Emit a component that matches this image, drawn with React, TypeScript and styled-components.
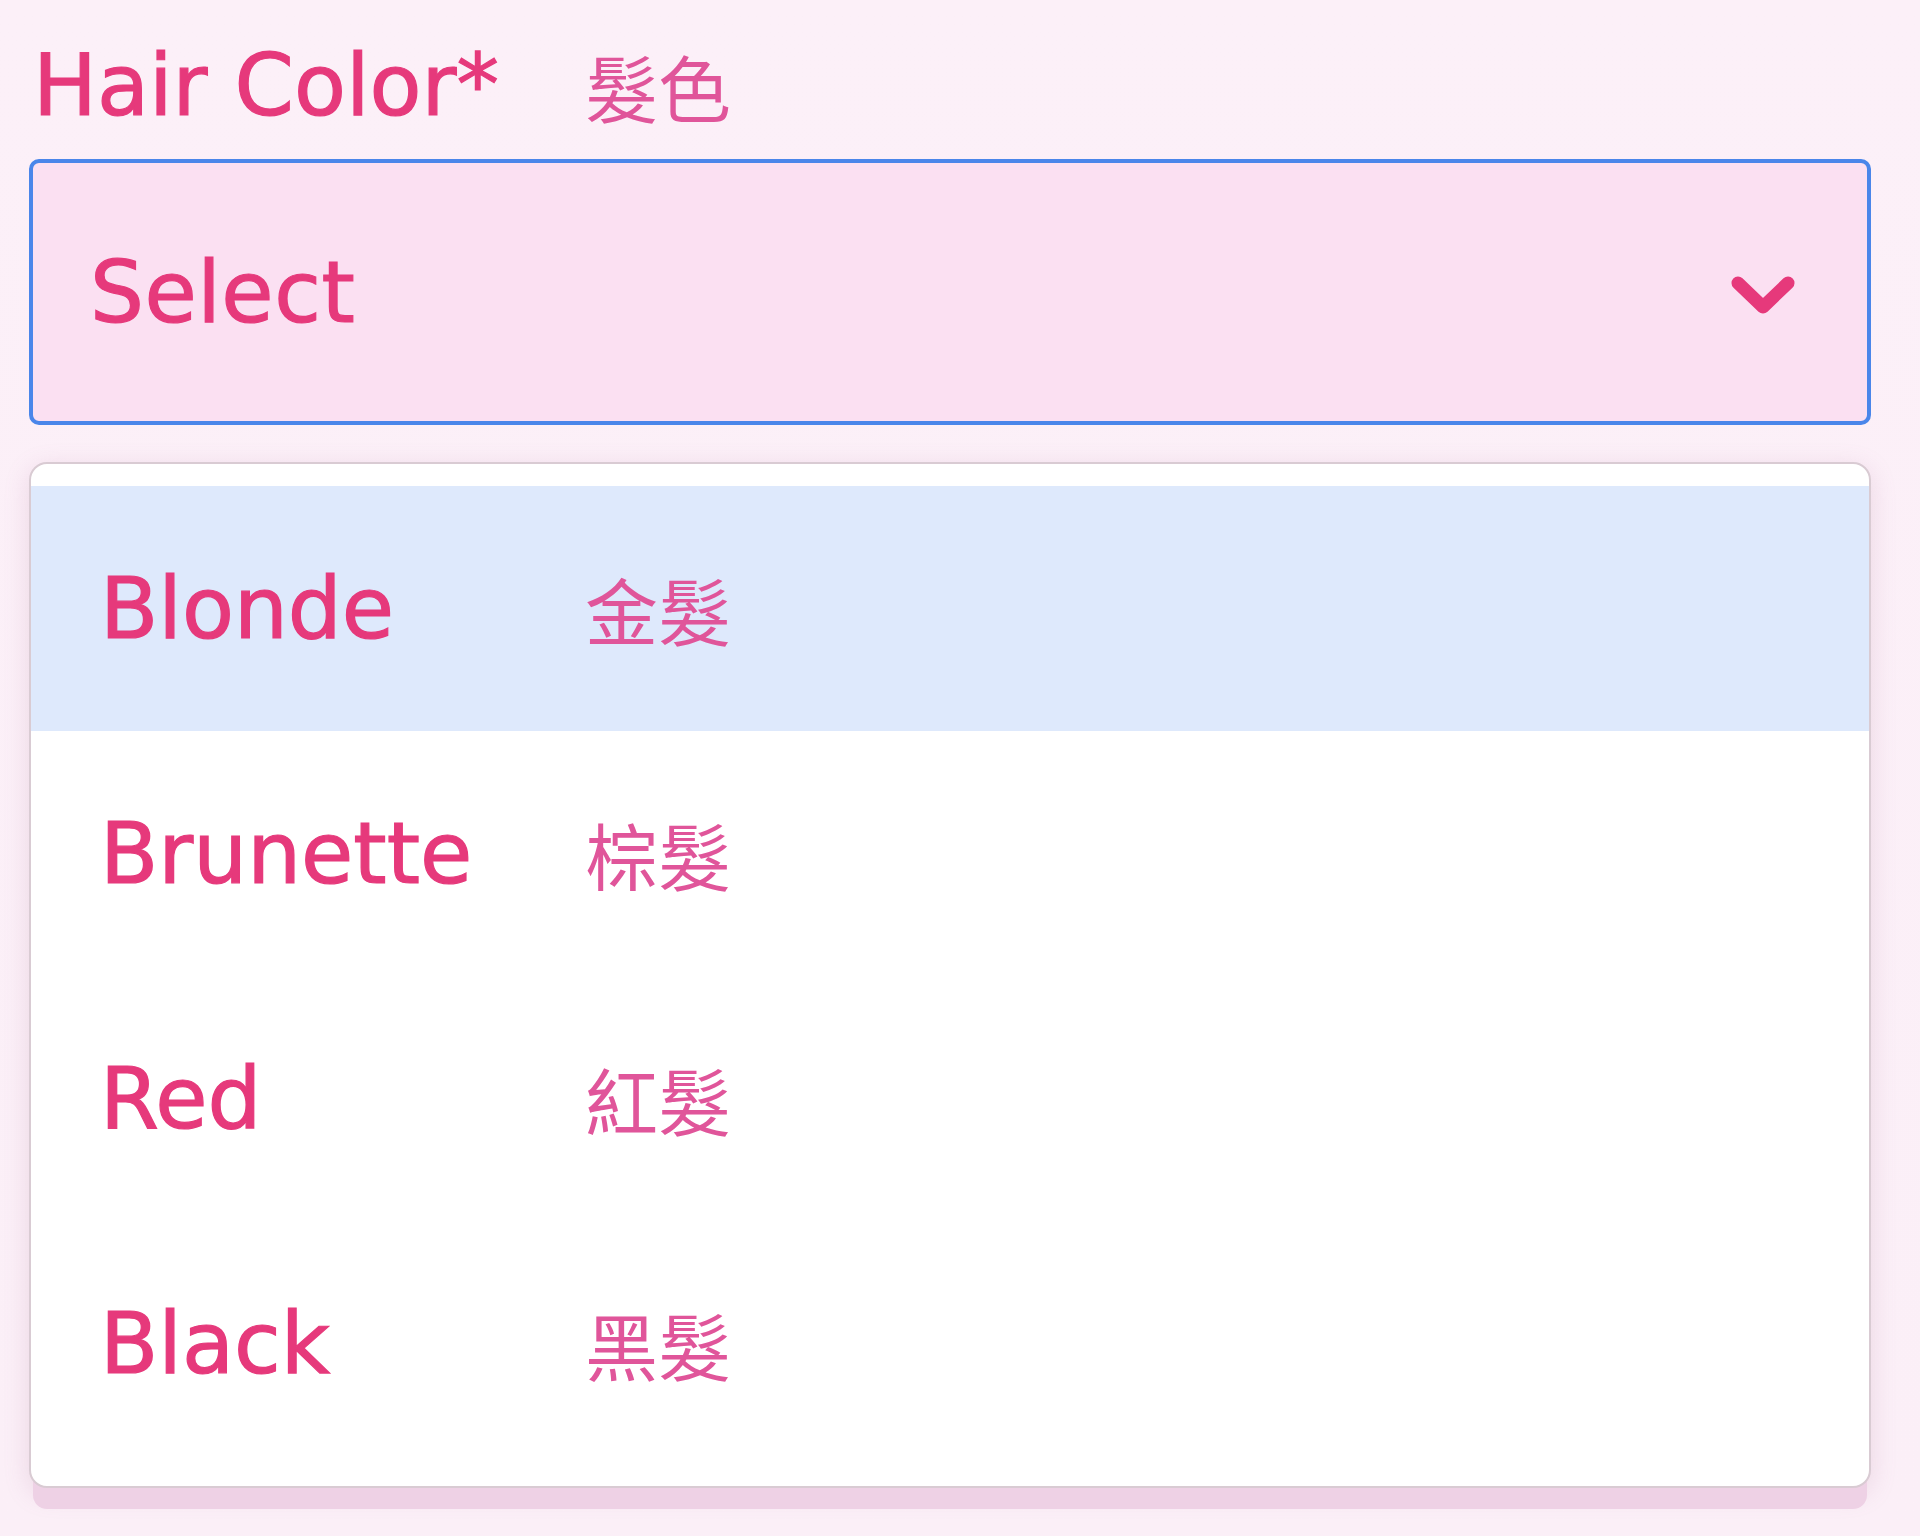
import React from 'react';
import styled, { createGlobalStyle } from 'styled-components';

const PINK = '#e6397b';
const CJK_PINK = '#e0559a';

const options = [
  { en: 'Blonde', zh: '金髮', active: true },
  { en: 'Brunette', zh: '棕髮', active: false },
  { en: 'Red', zh: '紅髮', active: false },
  { en: 'Black', zh: '黑髮', active: false },
];

const GlobalStyle = createGlobalStyle`
  html, body {
    margin: 0;
    padding: 0;
    background: linear-gradient(180deg, #fcf0f8 0%, #fbeff7 100%);
  }
  body {
    font-family: "DejaVu Sans", "Noto Sans CJK TC", sans-serif;
    min-height: 1536px;
  }
`;

const Page = styled.div`
  width: 1842px;
  padding: 43px 0 0 29px;
`;

const Label = styled.div`
  display: flex;
  align-items: center;
  padding-left: 4px;
  height: 85px;
  margin-bottom: 31px;
`;

const LatinText = styled.span<{ $col: number }>`
  width: ${p => p.$col}px;
  flex-shrink: 0;
  font-family: "DejaVu Sans", sans-serif;
  font-size: 85px;
  line-height: 1;
  color: ${PINK};
  -webkit-text-stroke: 1.2px ${PINK};
`;

const CjkText = styled.span`
  font-family: "Noto Sans CJK TC", "Noto Sans CJK SC", sans-serif;
  font-size: 73px;
  line-height: 1;
  color: ${CJK_PINK};
`;

const SelectBox = styled.div`
  box-sizing: border-box;
  height: 266px;
  display: flex;
  align-items: center;
  justify-content: space-between;
  padding: 0 72px 0 57px;
  background: #fbe0f2;
  border: 4px solid #4a86ea;
  border-radius: 10px;
`;

const SelectText = styled.span`
  font-size: 85px;
  line-height: 1;
  letter-spacing: 0.5px;
  color: ${PINK};
  -webkit-text-stroke: 1.2px ${PINK};
`;

const Chevron = styled.svg`
  display: block;
  width: 64px;
  height: 38px;
  margin-top: 6px;
`;

const Menu = styled.div`
  box-sizing: border-box;
  margin-top: 37px;
  padding: 22px 0 20px;
  background: #ffffff;
  border: 2px solid #d9cbd3;
  border-radius: 18px;
  box-shadow: 0 25px 0 -4px #eed1e5, 0 6px 26px rgba(170, 110, 150, 0.2);
`;

const Option = styled.div<{ $active: boolean }>`
  height: 245px;
  display: flex;
  align-items: center;
  padding-left: 69px;
  background: ${p => (p.$active ? '#dee9fc' : 'transparent')};
`;

const App: React.FC = () => (
  <>
    <GlobalStyle />
    <Page>
      <Label>
        <LatinText $col={552}>Hair Color*</LatinText>
        <CjkText>髮色</CjkText>
      </Label>
      <SelectBox>
        <SelectText>Select</SelectText>
        <Chevron viewBox="0 0 64 38">
          <path
            d="M7 7 L32 31 L57 7"
            fill="none"
            stroke={PINK}
            strokeWidth="13"
            strokeLinecap="round"
            strokeLinejoin="round"
          />
        </Chevron>
      </SelectBox>
      <Menu>
        {options.map(o => (
          <Option key={o.en} $active={o.active}>
            <LatinText $col={485}>{o.en}</LatinText>
            <CjkText>{o.zh}</CjkText>
          </Option>
        ))}
      </Menu>
    </Page>
  </>
);

export default App;
